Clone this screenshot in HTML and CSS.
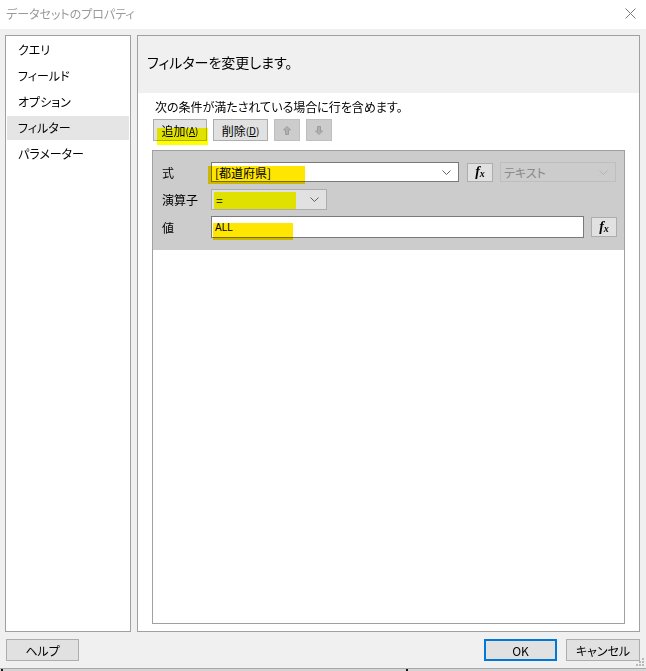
FILE: index.html
```html
<!DOCTYPE html>
<html lang="ja">
<head>
<meta charset="utf-8">
<link rel="stylesheet" href="styles.css">
</head>
<body>
<div class="titlebar">
  <span class="title">データセットのプロパティ</span>
  <svg class="close" width="11" height="11" viewBox="0 0 11 11"><path d="M0.5 0.5 L10.5 10.5 M10.5 0.5 L0.5 10.5" stroke="#7a7a7a" stroke-width="1" fill="none"/></svg>
</div>
<div class="main">
  <nav class="nav">
    <div class="nav-item">クエリ</div>
    <div class="nav-item">フィールド</div>
    <div class="nav-item">オプション</div>
    <div class="nav-item selected">フィルター</div>
    <div class="nav-item">パラメーター</div>
  </nav>
  <section class="pane">
    <div class="pane-head">フィルターを変更します。</div>
    <div class="pane-body">
      <p class="desc">次の条件が満たされている場合に行を含めます。</p>
      <div class="toolbar">
        <button class="btn add">追加<span class="acc">(<u>A</u>)</span><span class="hl hl-add"></span></button>
        <button class="btn del">削除<span class="acc">(<u>D</u>)</span></button>
        <button class="btn arrow" disabled><svg width="8" height="9" viewBox="0 0 8 9"><polygon points="4,0.5 7.5,4 5.5,4 5.5,8.5 2.5,8.5 2.5,4 0.5,4" fill="#b0b0b0" stroke="#9c9c9c" stroke-width="1"/></svg></button>
        <button class="btn arrow" disabled><svg width="8" height="9" viewBox="0 0 8 9"><polygon points="4,8.5 7.5,5 5.5,5 5.5,0.5 2.5,0.5 2.5,5 0.5,5" fill="#b0b0b0" stroke="#9c9c9c" stroke-width="1"/></svg></button>
      </div>
      <div class="filter-box">
        <div class="filter-area">
          <div class="row row1">
            <span class="label">式</span>
            <div class="combo expr"><span class="val">[都道府県]</span><svg class="chev" width="9" height="5" viewBox="0 0 9 5"><polyline points="0.5,0.5 4.5,4.5 8.5,0.5" fill="none" stroke="#606060"/></svg><span class="hl hl-expr"></span></div>
            <button class="fxbtn"><span class="fx-f">f</span><span class="fx-x">x</span></button>
            <div class="combo type"><span class="val">テキスト</span><svg class="chev" width="9" height="5" viewBox="0 0 9 5"><polyline points="0.5,0.5 4.5,4.5 8.5,0.5" fill="none" stroke="#b4b4b4"/></svg></div>
          </div>
          <div class="row row2">
            <span class="label">演算子</span>
            <div class="combo op"><span class="val">=</span><svg class="chev" width="9" height="5" viewBox="0 0 9 5"><polyline points="0.5,0.5 4.5,4.5 8.5,0.5" fill="none" stroke="#606060"/></svg><span class="hl hl-op"></span></div>
          </div>
          <div class="row row3">
            <span class="label">値</span>
            <div class="input value"><span class="val small">ALL</span><span class="hl hl-all"></span></div>
            <button class="fxbtn fx2"><span class="fx-f">f</span><span class="fx-x">x</span></button>
          </div>
        </div>
      </div>
    </div>
  </section>
</div>
<div class="footer">
  <button class="btn fbtn">ヘルプ</button>
  <div class="spacer"></div>
  <button class="btn fbtn ok">OK</button>
  <button class="btn fbtn cancel">キャンセル</button>
  <svg class="grip" width="9" height="9" viewBox="0 0 9 9">
    <rect x="6" y="0" width="2" height="2" fill="#b8b8b8"/>
    <rect x="3" y="3" width="2" height="2" fill="#b8b8b8"/>
    <rect x="6" y="3" width="2" height="2" fill="#b8b8b8"/>
    <rect x="0" y="6" width="2" height="2" fill="#b8b8b8"/>
    <rect x="3" y="6" width="2" height="2" fill="#b8b8b8"/>
    <rect x="6" y="6" width="2" height="2" fill="#b8b8b8"/>
  </svg>
</div>
<div class="strip"><span class="dot"></span><span class="seg"></span><span class="dot"></span><span class="seg2"></span></div>
</body>
</html>
```
FILE: styles.css
```css
* { box-sizing: border-box; }
html, body { margin: 0; padding: 0; }
body {
  width: 646px;
  height: 671px;
  overflow: hidden;
  background: #f0f0f0;
  font-family: "Noto Sans CJK JP", "Noto Sans", sans-serif;
  font-size: 12px;
  font-feature-settings: "palt";
  color: #000;
}
.titlebar {
  height: 29px;
  background: #fff;
  display: flex;
  align-items: center;
  padding: 0 10px 0 6px;
}
.title {
  color: #9a9a9a;
  font-size: 12px;
  flex: 1;
  margin-top: -2px;
}
.close { margin-top: -3px; }
.main {
  display: flex;
  gap: 6px;
  padding: 6px 6px 0 5px;
  height: 603px;
}
.nav {
  width: 126px;
  height: 597px;
  background: #fff;
  border: 1px solid #a0a0a0;
  padding-top: 1px;
}
.nav-item {
  height: 26px;
  line-height: 26px;
  padding-left: 11px;
  margin: 0 1px;
}
.nav-item.selected {
  background: #e5e5e5;
  height: 24px;
  line-height: 24px;
  margin-top: 1px;
  margin-bottom: 1px;
}
.pane {
  width: 503px;
  height: 597px;
  border: 1px solid #a0a0a0;
  background: #fff;
  display: flex;
  flex-direction: column;
}
.pane-head {
  height: 57px;
  background: #f0f0f0;
  padding: 16px 0 0 9px;
  font-size: 14px;
  line-height: 20px;
}
.pane-body {
  flex: 1;
  display: flex;
  flex-direction: column;
  padding: 0 14px 7px 14px;
}
.desc {
  margin: 6px 0 0 3px;
  line-height: 16px;
  font-size: 12px;
}
.toolbar {
  display: flex;
  gap: 6px;
  margin-top: 4px;
  margin-left: 1px;
}
.btn {
  position: relative;
  height: 22px;
  background: #e1e1e1;
  border: 1px solid #adadad;
  font-family: inherit;
  font-feature-settings: "palt";
  font-size: 12px;
  color: #000;
  padding: 0;
  display: flex;
  align-items: center;
  justify-content: center;
}
.btn.add { width: 54px; }
.btn.del { width: 55px; }
.acc { font-size: 10px; }
.btn.arrow {
  width: 26px;
  background: #cccccc;
  border-color: #bfbfbf;
}
.hl {
  position: absolute;
  mix-blend-mode: multiply;
  pointer-events: none;
}
.hl-add { left: 3px; top: 8px; width: 51px; height: 17px; background: #ffff00; }
.filter-box {
  flex: 1;
  margin-top: 9px;
  border: 1px solid #a0a0a0;
  background: #fff;
}
.filter-area {
  background: #cccccc;
  height: 99px;
  padding: 11px 7px 0 9px;
}
.row {
  display: flex;
  align-items: center;
}
.row1 { height: 20px; }
.row2 { height: 21px; margin-top: 7px; }
.row3 { height: 22px; margin-top: 6px; }
.label {
  width: 49px;
  flex: none;
}
.combo, .input {
  position: relative;
  height: 100%;
  display: flex;
  align-items: center;
  padding-left: 3px;
  border: 1px solid #7a7a7a;
  background: #fff;
}
.combo .val, .input .val { flex: 1; }
.chev { margin-right: 7px; flex: none; }
.combo.expr { width: 248px; }
.combo.type {
  width: 116px;
  margin-left: 7px;
  background: #cccccc;
  border-color: #bfbfbf;
  color: #8a8a8a;
}
.combo.op {
  width: 116px;
  background: #e1e1e1;
  border-color: #adadad;
  padding-left: 4px;
}
.input.value { width: 374px; }
.val.small { font-size: 10px; font-family: "Liberation Sans", sans-serif; }
.hl-expr { left: -4px; top: 3px; width: 97px; height: 18px; background: #ffe600; }
.hl-op { left: 2px; top: 2px; width: 82px; height: 17px; background: #ffff00; }
.hl-all { left: 1px; top: 6px; width: 80px; height: 17px; background: #ffe600; }
.fxbtn {
  width: 26px;
  height: 19px;
  margin-left: 8px;
  background: #e1e1e1;
  border: 1px solid #adadad;
  padding: 0;
  display: flex;
  align-items: center;
  justify-content: center;
  font-family: "Liberation Serif", serif;
  font-weight: bold;
  font-style: italic;
  color: #000;
}
.fxbtn.fx2 { height: 20px; margin-left: 7px; }
.fx-f { font-size: 14px; }
.fx-x { font-size: 10px; margin-top: 3px; }
.footer {
  position: relative;
  height: 36px;
  display: flex;
  align-items: flex-start;
  gap: 9px;
  padding: 7px 6px 0 6px;
}
.spacer { flex: 1; }
.fbtn { width: 73px; height: 22px; }
.fbtn.cancel { width: 74px; }
.fbtn.ok { border: 2px solid #0078d7; }
.grip { position: absolute; right: 1px; bottom: 1px; }
.strip {
  height: 3px;
  display: flex;
  border-top: 1px solid #a8a8a8;
  background: #d4d4d4;
}
.strip .dot { width: 2px; background: #111; margin-left: 1px; }
.strip .seg { width: 402px; }
```
